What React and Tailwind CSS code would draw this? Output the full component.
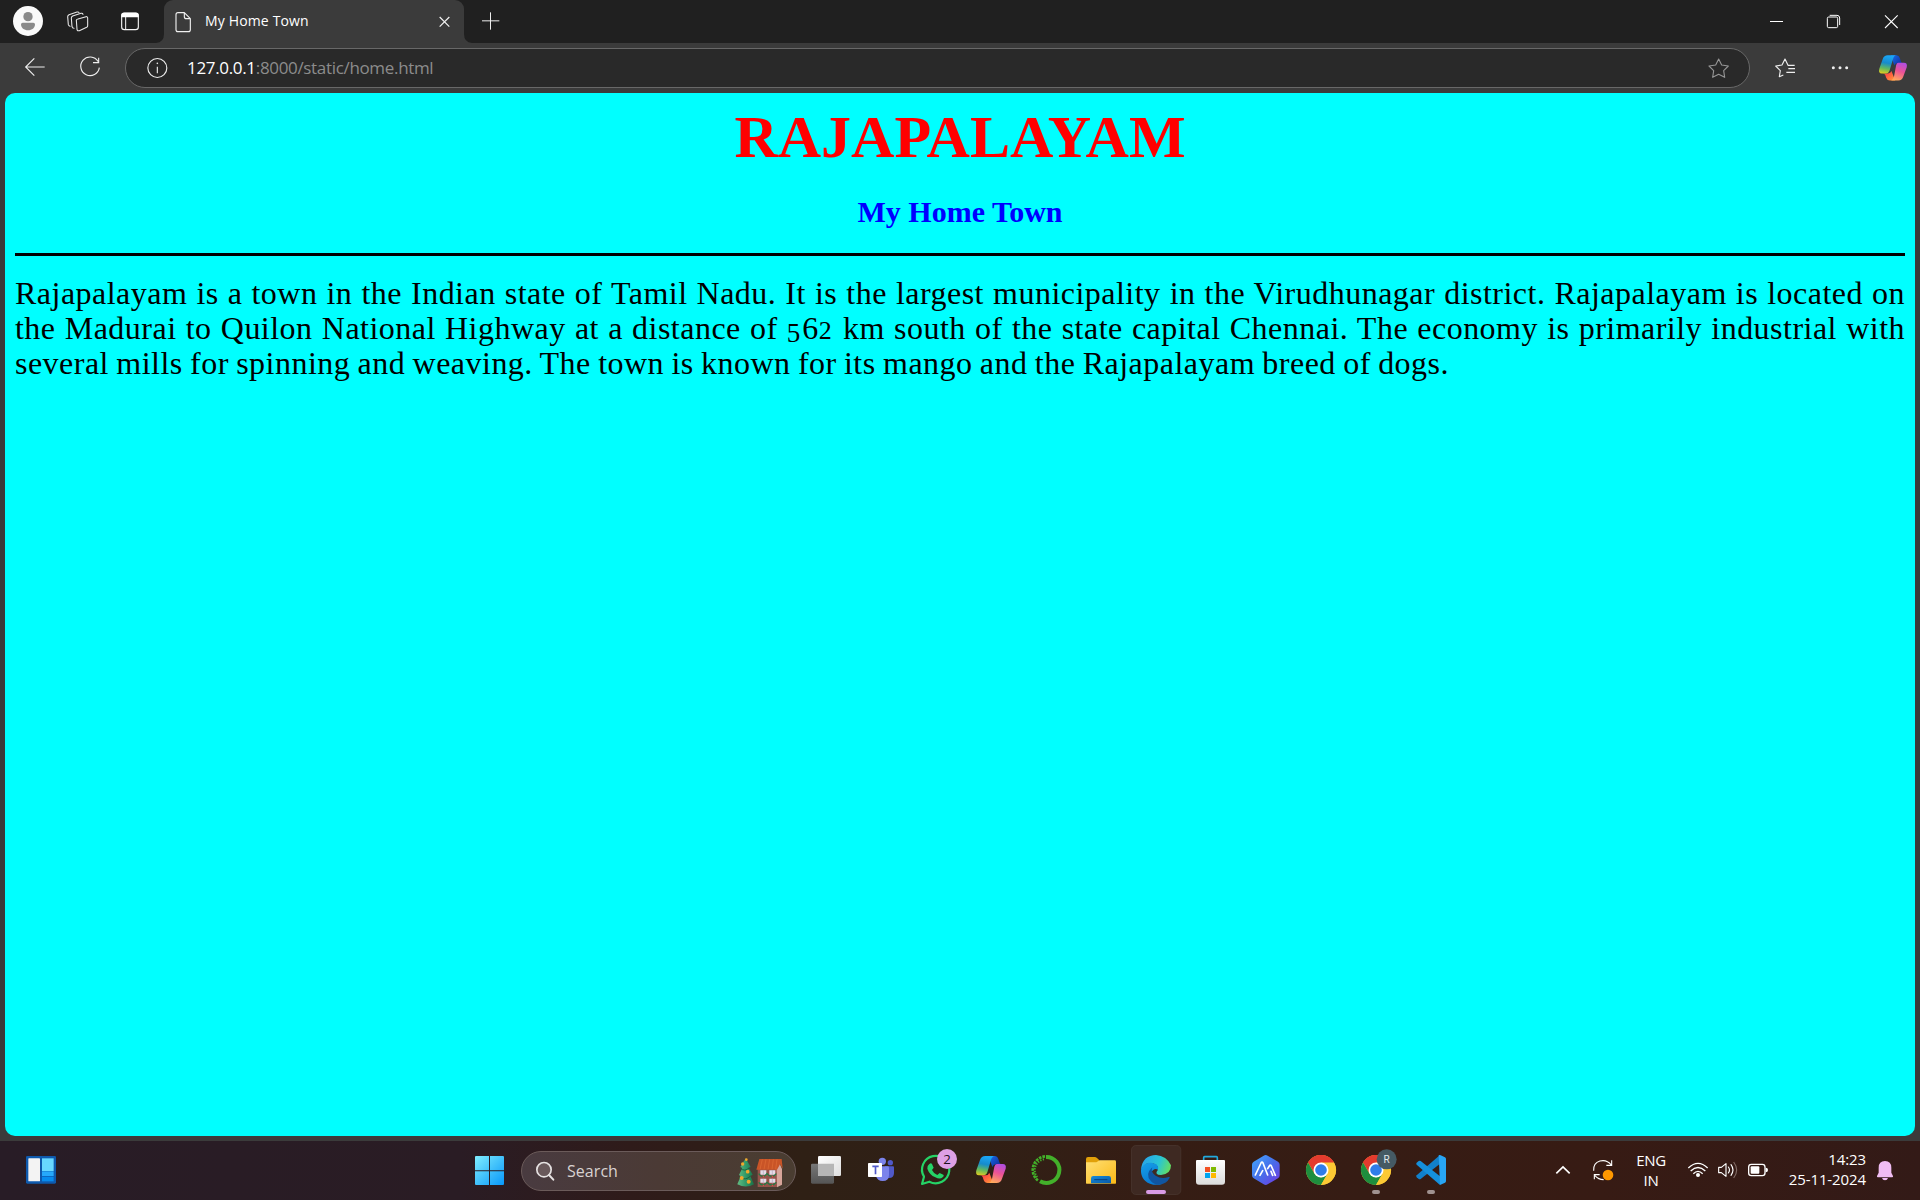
import React from "react";

const UI = "font-['Open_Sans','Noto_Sans',sans-serif]";

/* Drawing surface whose units are thirds of a pixel. */
function Art({ w, h, x = 0, y = 0, className = "", children }) {
  return (
    <svg
      width={w}
      height={h}
      viewBox={`${x} ${y} ${w * 3} ${h * 3}`}
      fill="none"
      className={`block shrink-0 ${className}`}
    >
      {children}
    </svg>
  );
}

function TabStrip() {
  return (
    <div className="flex h-[43px] w-full bg-[#202020]">
      <Art w={156} h={43}>
        <circle cx="84" cy="63" r="45" fill="#fafafa" />
        <circle cx="84" cy="50" r="14" fill="#8a8a8a" />
        <path d="M63 73a5 5 0 0 1 5-5h32a5 5 0 0 1 5 5c0 11-9 18-21 18s-21-7-21-18z" fill="#8a8a8a" />
        <g stroke="#e8e8e8" strokeWidth="3.2" strokeLinejoin="round" strokeLinecap="round">
          <path d="M234 57l24-7a4 4 0 0 1 5 4v23q0 3-3 5l-22 10q-6 2-7-4l-2-27q0-3 5-4z" />
          <path d="M222 85q-5 0-6-5l-2-26q0-4 4-6l25-8q5-1 6 3" />
          <path d="M210 79q-4-1-5-5l-2-24q0-4 4-6l24-8q5-1 6 2" />
        </g>
        <rect x="365" y="39" width="50" height="50" rx="8" stroke="#f5f5f5" strokeWidth="3.4" />
        <path d="M364 52V46q0-8 8-8h36q8 0 8 8v6z" fill="#fff" />
        <path d="M377 51v38" stroke="#f5f5f5" strokeWidth="3" />
      </Art>
      <Art w={8} h={43}>
        <path d="M24 102v27H0q24-2 24-27z" fill="#3b3b3b" />
      </Art>
      <div className="flex w-[300px] items-center rounded-t-[9px] bg-[#3b3b3b]">
        <Art w={41} h={43} x={492}>
          <path
            d="M534 38h19l18 18v33q0 6-6 6h-31q-6 0-6-6V44q0-6 6-6zM553 38v12q0 6 6 6h12"
            stroke="#f0f0f0"
            strokeWidth="3.4"
            strokeLinejoin="round"
          />
        </Art>
        <span className={`${UI} w-[230px] whitespace-nowrap pb-[2px] text-[14px] leading-[20px] tracking-[0.15px] text-white`}>
          My Home Town
        </span>
        <Art w={29} h={43} x={1305}>
          <path d="M1319 51l29 29M1348 51l-29 29" stroke="#f2f2f2" strokeWidth="3.6" />
        </Art>
      </div>
      <Art w={8} h={43}>
        <path d="M0 102v27h24q-24-2-24-27z" fill="#3b3b3b" />
      </Art>
      <Art w={48} h={43} x={1416}>
        <path d="M1446 62.500h52M1471.500 37v52" stroke="#ededed" strokeWidth="3" />
      </Art>
      <div className="flex-1" />
      <Art w={180} h={43} x={240}>
        <path d="M330 64.500h39" stroke="#fff" strokeWidth="3" />
        <rect x="502" y="51" width="31" height="32" rx="4" stroke="#fff" strokeWidth="3" />
        <path d="M509 46h22q8 0 8 8v21" stroke="#fff" strokeWidth="3" />
        <path d="M675 46l38 38M713 46l-38 38" stroke="#fff" strokeWidth="3.2" />
      </Art>
    </div>
  );
}

function Ribbon({ id, transform }) {
  return (
    <g transform={transform}>
      <defs>
        <linearGradient id={`${id}a`} x1="20" y1="0" x2="8" y2="60" gradientUnits="userSpaceOnUse">
          <stop offset="0" stopColor="#1aa5f5" />
          <stop offset=".38" stopColor="#168bcc" />
          <stop offset=".68" stopColor="#63b95d" />
          <stop offset="1" stopColor="#f2ce16" />
        </linearGradient>
        <linearGradient id={`${id}b`} x1="75" y1="20" x2="52" y2="80" gradientUnits="userSpaceOnUse">
          <stop offset="0" stopColor="#aa4dea" />
          <stop offset=".5" stopColor="#ec5296" />
          <stop offset="1" stopColor="#ffaa5c" />
        </linearGradient>
        <linearGradient id={`${id}c`} x1="40" y1="0" x2="65" y2="22" gradientUnits="userSpaceOnUse">
          <stop offset="0" stopColor="#1a6be8" />
          <stop offset="1" stopColor="#123cae" />
        </linearGradient>
        <linearGradient id={`${id}d`} x1="22" y1="56" x2="40" y2="80" gradientUnits="userSpaceOnUse">
          <stop offset="0" stopColor="#ff3d45" />
          <stop offset="1" stopColor="#ff8d3a" />
        </linearGradient>
      </defs>
      <path d="M38 0h18q8 0 11 9l4 12q2 4 7 4H60q-8 0-11 8z" fill={`url(#${id}c)`} />
      <path d="M52 81H35q-9 0-12-9l-3-9q-2-5-8-5h17q8 0 11-8z" fill={`url(#${id}d)`} />
      <path d="M28 0h28q-8 1-11 12L34 49q-3 9-11 9H9Q-3 58 1 43L12 12Q16 0 28 0z" fill={`url(#${id}a)`} />
      <path d="M62 24h18q12 0 9 14L78 68q-4 13-16 13H39q6-2 9-12l7-37q2-8 7-8z" fill={`url(#${id}b)`} />
    </g>
  );
}

function Toolbar() {
  return (
    <div className="flex h-[50px] w-full bg-[#3b3b3b]">
      <Art w={125} h={50} y={129}>
        <path d="M134 201H77M103 175l-26 26 26 26" stroke="#eee" strokeWidth="3.4" />
        <path d="M294 184A28 28 0 1 0 298 203M296 173v15h-17" stroke="#eee" strokeWidth="3.4" />
      </Art>
      <div className="mt-[5px] flex h-[40px] w-[1625px] items-center rounded-full border border-[#686868] bg-[#292929]">
        <Art w={61} h={38} x={378} y={147}>
          <circle cx="472" cy="204" r="28.500" stroke="#eee" strokeWidth="3.4" />
          <path d="M472 200v20" stroke="#eee" strokeWidth="3.4" />
          <circle cx="472" cy="190" r="2.500" fill="#eee" />
        </Art>
        <span className={`${UI} flex-1 whitespace-nowrap text-[17px] leading-[24px] tracking-[-0.33px] text-[#8c8c8c]`}>
          <span className="text-white">127.0.0.1</span>:8000/static/home.html
        </span>
        <Art w={60} h={38} x={87} y={147}>
          <path
            d="M176 177l9 18 20 3-14 14 3 20-18-9-18 9 3-20-14-14 20-3z"
            stroke="#969696"
            strokeWidth="3.3"
            strokeLinejoin="round"
          />
        </Art>
      </div>
      <Art w={170} h={50} x={270} y={129}>
        <path
          d="M404 196h-20l-9-19-9 18-19 3 14 14-3 18 12-5M405 206h-20M405 217h-26"
          stroke="#eee"
          strokeWidth="3.4"
          strokeLinejoin="round"
        />
        <g fill="#eee">
          <circle cx="520" cy="203" r="4.500" />
          <circle cx="540" cy="203" r="4.500" />
          <circle cx="560" cy="203" r="4.500" />
        </g>
        <Ribbon id="tb" transform="translate(657 166) scale(.935)" />
      </Art>
    </div>
  );
}

function Page() {
  return (
    <div className="h-[1048px] w-full bg-[#3b3b3b] px-[5px]">
      <main className="flex h-[1043px] w-full flex-col rounded-[10px] bg-[#00ffff] px-[10px] font-['Liberation_Serif',serif]">
        <h1 className="mt-[10px] text-center text-[60px] font-bold leading-[68px] text-[#ff0000]">RAJAPALAYAM</h1>
        <h2 className="mt-[24px] text-center text-[30px] font-bold leading-[34px] text-[#0000ff]">My Home Town</h2>
        <div className="mt-[24px] h-[3px] w-full shrink-0 bg-black" />
        <div className="mt-[20px] text-[32px] leading-[35px] tracking-[0.48px] text-black [word-spacing:-2px]">
          <p className="whitespace-nowrap [text-align-last:justify]">
            Rajapalayam is a town in the Indian state of Tamil Nadu. It is the largest municipality in the Virudhunagar district. Rajapalayam is located on
          </p>
          <p className="whitespace-nowrap [text-align-last:justify]">
            the Madurai to Quilon National Highway at a distance of{" "}
            <span className="relative top-[3px] text-[27px] leading-[20px] tracking-[2px]">5</span>6
            <span className="text-[26px] leading-[20px] tracking-[2px]">2</span>{" "}
            km south of the state capital Chennai. The economy is primarily industrial with
          </p>
          <p className="w-[1434px] whitespace-nowrap [text-align-last:justify]">
            several mills for spinning and weaving. The town is known for its mango and the Rajapalayam breed of dogs.
          </p>
        </div>
      </main>
    </div>
  );
}

function Slot({ x, children }) {
  return (
    <Art w={55} h={59} x={x} y={33}>
      {children}
    </Art>
  );
}

function Chrome({ cx, cy = 120 }) {
  return (
    <g transform={`translate(${cx} ${cy})`}>
      <circle r="45" fill="#fcc934" />
      <path d="M0 0L-39-22.500A45 45 0 0 1 39-22.500z" fill="#e33b2e" />
      <path d="M0-22.500H39A45 45 0 0 0-39-22.500L-19 11z" fill="#e33b2e" />
      <path d="M-39-22.500L-19.500 11.300 0 22.500 19.500 11.300 0 45A45 45 0 0 1-39-22.500z" fill="#1e8e3e" />
      <path d="M0-22.500H39A45 45 0 0 1 0 45L19.500 11.300z" fill="#fcc934" />
      <circle r="22.500" fill="#fff" />
      <circle r="17.500" fill="#2f7de9" />
    </g>
  );
}

function SearchBox() {
  return (
    <div className="my-auto ml-[7px] flex h-[40px] w-[275px] items-center rounded-full border border-[#6b5b5a] bg-gradient-to-r from-[#493b40] via-[#4b3a35] to-[#4a3d31]">
      <Art w={45} h={38} x={186} y={63}>
        <circle cx="252" cy="116" r="21.500" fill="#69595b" stroke="#e6e2e2" strokeWidth="5" />
        <path d="M267 132l13 14" stroke="#e6e2e2" strokeWidth="6" strokeLinecap="round" />
      </Art>
      <span className={`${UI} w-[165px] text-[16px] leading-[22px] tracking-[0.05px] text-[#d8d2d1]`}>Search</span>
      <Art w={62} h={38} x={816} y={65}>
        <defs>
          <linearGradient id="tree" x1="832" y1="0" x2="882" y2="0" gradientUnits="userSpaceOnUse">
            <stop stopColor="#64bd83" />
            <stop offset=".5" stopColor="#329968" />
            <stop offset="1" stopColor="#177047" />
          </linearGradient>
        </defs>
        <path d="M857 84l15 26-6 2 12 21-7 4 11 25q-24 13-50 0l10-24-5-4 10-21-6-3z" fill="url(#tree)" />
        <path d="M841 114q14 11 26-1M837 141q20 11 35-4" stroke="#19633d" strokeWidth="3" />
        <g fill="#f3a72c">
          <circle cx="859" cy="88" r="4" />
          <circle cx="848" cy="101" r="5" />
          <circle cx="863" cy="124" r="5.500" />
          <circle cx="845" cy="143" r="6" />
          <circle cx="866" cy="154" r="6" />
        </g>
        <path d="M893 115h58v55h-58z" fill="#96534a" />
        <path d="M950 117l7-22 9 21v47l-15 8z" fill="#d7a59a" />
        <path d="M898 86h67l3 29-8-13-9 16h-62z" fill="#c95427" />
        <path d="M907 87l-7 30M918 87l-6 30M929 87l-5 30M940 87l-4 30M951 87l-4 30" stroke="#e06c36" strokeWidth="2" />
        <path d="M901 120h18v13h-18zM928 120h18v13h-18zM901 145h18v12h-18zM928 145h18v12h-18z" fill="#e6dce8" />
        <path d="M910 119v16M937 119v16M910 145v15M937 145v15" stroke="#b5a8b9" strokeWidth="2" />
        <path d="M896 130q12 17 25 0 14 17 28 0M896 156q12 16 25 0 14 16 28 0" stroke="#257a45" strokeWidth="4" />
        <path d="M908 139h4M935 139h4M908 165h4M935 165h4" stroke="#e84343" strokeWidth="4" />
      </Art>
    </div>
  );
}

function TaskIcons() {
  return (
    <>
      <Slot x={-3}>
        <defs>
          <linearGradient id="tv1" x1="0" y1="0" x2="0" y2="1"><stop stopColor="#777" /><stop offset="1" stopColor="#555" /></linearGradient>
          <linearGradient id="tv2" x1="0" y1="0" x2="1" y2="1"><stop stopColor="#fff" /><stop offset="1" stopColor="#dedede" /></linearGradient>
        </defs>
        <rect x="33" y="101" width="69" height="60" rx="4" fill="url(#tv1)" />
        <rect x="54" y="78" width="69" height="60" rx="4" fill="url(#tv2)" />
        <path d="M54 101h48v37H58q-4 0-4-4z" fill="#b6b6b6" />
      </Slot>
      <Slot x={162}>
        <circle cx="271" cy="98" r="8" fill="#5059c9" />
        <circle cx="247" cy="94" r="11" fill="#7b83eb" />
        <path d="M255 109h24q3 0 3 3v17q0 15-15 15h-12z" fill="#5059c9" />
        <path d="M228 109h35q4 0 4 4v22q0 18-19 18-16 0-20-15z" fill="#7b83eb" />
        <rect x="204" y="99" width="42" height="42" rx="2" fill="#fff" />
        <path d="M217 109h19M226.500 109v24" stroke="#5059c9" strokeWidth="5" />
      </Slot>
      <Slot x={327}>
        <path
          d="M366 162l6-22a41 41 0 1 1 16 15z"
          stroke="#25d366"
          strokeWidth="6.500"
          strokeLinejoin="round"
        />
        <path
          d="M388 102q5-5 8 0l5 11-5 7q5 11 16 15l7-6 11 5q4 3-2 8-8 7-22 0-18-8-24-26-1-9 6-14z"
          fill="#25d366"
        />
        <circle cx="441" cy="87" r="30" fill="#dda0e5" />
        <text x="441" y="101" textAnchor="middle" fontSize="40" fill="#1c111d" fontFamily="Open Sans, sans-serif">2</text>
      </Slot>
      <Slot x={492}>
        <Ribbon id="tk" transform="translate(528 78)" />
      </Slot>
      <Slot x={657}>
        <path d="M738 81a39 39 0 1 1-18 73" stroke="#43b02a" strokeWidth="12" />
        <path d="M735 79a41 41 0 0 0-21 73" stroke="#43b02a" strokeWidth="8" strokeDasharray="8 3" />
        <path d="M732 88a33 33 0 0 0-19 55" stroke="#43b02a" strokeWidth="6" strokeDasharray="4 4" />
      </Slot>
      <Slot x={822}>
        <defs>
          <linearGradient id="fo" x1="0" y1="0" x2="1" y2="1"><stop stopColor="#ffdf75" /><stop offset="1" stopColor="#fbba16" /></linearGradient>
          <linearGradient id="fb" x1="0" y1="0" x2="1" y2="1"><stop stopColor="#168cda" /><stop offset="1" stopColor="#0758a8" /></linearGradient>
        </defs>
        <path d="M858 112V87q0-6 6-6h20q4 0 7 3l7 7v21z" fill="#e1a009" />
        <path d="M858 97h31l10-6h45q4 0 4 4v64q0 2-2 2h-86q-2 0-2-2z" fill="url(#fo)" />
        <path d="M873 160v-15q0-7 7-7h46q7 0 7 7v15z" fill="url(#fb)" />
        <path d="M884 149h37" stroke="#063f82" strokeWidth="3" strokeLinecap="round" />
      </Slot>
      <Slot x={-3}>
        <defs>
          <linearGradient id="eg1" x1="48" y1="85" x2="123" y2="115" gradientUnits="userSpaceOnUse">
            <stop stopColor="#29a9e5" /><stop offset=".5" stopColor="#28c4d6" /><stop offset="1" stopColor="#68df5a" />
          </linearGradient>
          <linearGradient id="eg2" x1="40" y1="100" x2="70" y2="164" gradientUnits="userSpaceOnUse">
            <stop stopColor="#159de7" /><stop offset="1" stopColor="#0878d1" />
          </linearGradient>
        </defs>
        <rect x="4.500" y="46.500" width="148" height="147" rx="13" fill="#3e2922" stroke="#4c3932" strokeWidth="2" />
        <path d="M33 120C35 89 54 75 78 75q31 2 45 31 0 27-30 29-22-1-9-16 2-20-25-20-17 1-26 21z" fill="url(#eg1)" />
        <path d="M33 120c5-17 19-24 34-21 16 2 20 13 16 21-4-6-16-2-18 8-3 17 10 32 32 33q-17 7-37 0c-20-7-28-25-27-41z" fill="url(#eg2)" />
        <path d="M67 112q-24 22-4 42 18 18 43 4 8-5 13-15 1-3-3-2-22 8-39-4-16-11-10-25z" fill="#1055a0" />
        <rect x="48" y="180" width="60" height="12" rx="6" fill="#d99be5" />
      </Slot>
      <Slot x={162}>
        <defs>
          <linearGradient id="st" x1="0" y1="0" x2="0" y2="1"><stop stopColor="#fff" /><stop offset="1" stopColor="#dcdcdc" /></linearGradient>
        </defs>
        <path d="M221 97V83q0-3 3-3h35q3 0 3 3v14" stroke="#22aade" strokeWidth="5" />
        <path d="M198 93q0-3 3-3h81q3 0 3 3v62q0 9-9 9h-69q-9 0-9-9z" fill="url(#st)" />
        <path d="M225 111h15v15h-15z" fill="#f25022" />
        <path d="M243 111h15v15h-15z" fill="#7fba00" />
        <path d="M225 129h15v15h-15z" fill="#00a4ef" />
        <path d="M243 129h15v15h-15z" fill="#ffb900" />
      </Slot>
      <Slot x={327}>
        <defs>
          <linearGradient id="ar" x1="0" y1="0" x2="1" y2="1"><stop stopColor="#42a9ff" /><stop offset=".5" stopColor="#476eea" /><stop offset="1" stopColor="#7137e2" /></linearGradient>
        </defs>
        <path d="M401 77q6-4 12 0l31 18q5 3 5 9v32q0 6-5 9l-31 18q-6 4-12 0l-30-18q-5-3-5-9v-32q0-6 5-9z" fill="url(#ar)" />
        <path
          d="M376 135l17-36q3-5 6 0l14 36M390 136l8-14M413 116l5-8q3-5 6 0l12 28M423 124l5 12"
          stroke="#fff"
          strokeWidth="5"
          strokeLinecap="round"
          strokeLinejoin="round"
        />
      </Slot>
      <Slot x={492}>
        <Chrome cx={573} />
      </Slot>
      <Slot x={657}>
        <Chrome cx={738} />
        <circle cx="770" cy="88" r="30" fill="#455a64" />
        <text x="770" y="98" textAnchor="middle" fontSize="30" fill="#e2e9ec" fontFamily="Roboto, sans-serif">R</text>
        <rect x="726" y="180" width="24" height="12" rx="6" fill="#a09290" />
      </Slot>
      <Slot x={822}>
        <path d="M930 75l-70 61q-3 3 0 6l6 5q3 2 6 0l58-46z" fill="#1180cb" />
        <path d="M930 165l-70-61q-3-3 0-6l6-5q3-2 6 0l58 46z" fill="#1590dc" />
        <path d="M926 76q3-2 6 0l13 6q3 2 3 5v66q0 3-3 5l-15 7z" fill="#28a5f4" />
        <rect x="891" y="180" width="24" height="12" rx="6" fill="#a09290" />
      </Slot>
    </>
  );
}

function Tray() {
  return (
    <>
      <Art w={35} h={59} x={75} y={63}>
        <path d="M109 160l20-19 20 19" stroke="#fff" strokeWidth="5" />
      </Art>
      <Art w={45} h={59} x={180} y={63}>
        <path d="M221 152c-2-31 34-40 53-17M275 121v15h-16M223 178v-14h16M225 167q10 12 26 12" stroke="#fff" strokeWidth="3.300" />
        <circle cx="264" cy="165" r="16" fill="#ff9800" />
      </Art>
      <div className={`${UI} flex w-[52px] flex-col justify-center pb-[2px] text-center text-[15px] leading-[20px] tracking-[-0.3px] text-white`}>
        <span>ENG</span>
        <span>IN</span>
      </div>
      <Art w={100} h={59} x={471} y={63}>
        <path d="M505 144q29-28 58 0M512 153q22-21 44 0M520 161q14-14 28 0" stroke="#fff" strokeWidth="4" />
        <circle cx="534" cy="165" r="6" fill="#fff" />
        <path d="M596 142h8l14-11v38l-14-11h-8z" stroke="#fff" strokeWidth="3.400" strokeLinejoin="round" />
        <path d="M625 141q7 9 0 18M633 134q12 16 0 32" stroke="#fff" strokeWidth="3.400" strokeLinecap="round" />
        <path d="M641 126q18 24 0 48" stroke="#806a65" strokeWidth="3.400" />
        <rect x="686" y="133" width="49" height="34" rx="8" stroke="#fff" strokeWidth="4" />
        <rect x="692" y="139" width="26" height="22" rx="3" fill="#fff" />
        <path d="M737 143q7 0 7 7t-7 7z" fill="#fff" />
      </Art>
      <div className={`${UI} flex w-[89px] flex-col justify-center whitespace-nowrap pb-[4px] text-right text-[15px] leading-[20px] tracking-[-0.100px] text-white`}>
        <span>14:23</span>
        <span>25-11-2024</span>
      </div>
      <Art w={54} h={59} x={1038} y={63}>
        <path d="M1095 123q19 0 19 20v15l5 10q1 4-3 4h-42q-4 0-3-4l5-10v-15q0-20 19-20z" fill="#f0bdf3" />
        <path d="M1086 174h18q-2 7-9 7t-9-7z" fill="#f0bdf3" />
      </Art>
    </>
  );
}

function Taskbar() {
  return (
    <div className="flex h-[59px] w-full bg-[linear-gradient(90deg,#281c26_0px,#2a1c24_460px,#2f1b1a_630px,#2f2015_800px,#302016_960px,#351d14_1140px,#371b14_1600px,#331a17_1920px)]">
      <Art w={468} h={59} y={63}>
        <rect x="78" y="108" width="90" height="83" rx="4" fill="#0e59ad" />
        <rect x="85" y="115" width="35" height="69" rx="2" fill="#f3f3f3" />
        <path d="M126 115h35v38h-35z" fill="#68d8ff" />
        <path d="M126 154h35v14h-35z" fill="#26a9fb" />
        <path d="M126 170h35v14h-35z" fill="#078bed" />
      </Art>
      <Art w={46} h={59} x={24} y={33}>
        <defs>
          <linearGradient id="win" x1="45" y1="78" x2="131" y2="164" gradientUnits="userSpaceOnUse">
            <stop stopColor="#80eeff" />
            <stop offset=".5" stopColor="#43c2fb" />
            <stop offset="1" stopColor="#0999fb" />
          </linearGradient>
        </defs>
        <path d="M48 78h39v43H45V81q0-3 3-3zM90 78h39q3 0 3 3v40H90zM45 124h42v41H48q-3 0-3-3zM90 124h42v38q0 3-3 3H90z" fill="url(#win)" />
      </Art>
      <SearchBox />
      <div className="w-[3px]" />
      <TaskIcons />
      <div className="flex-1" />
      <Tray />
    </div>
  );
}

export default function App() {
  return (
    <div className="flex h-[1200px] w-[1920px] flex-col overflow-hidden bg-[#3b3b3b]">
      <TabStrip />
      <Toolbar />
      <Page />
      <Taskbar />
    </div>
  );
}
